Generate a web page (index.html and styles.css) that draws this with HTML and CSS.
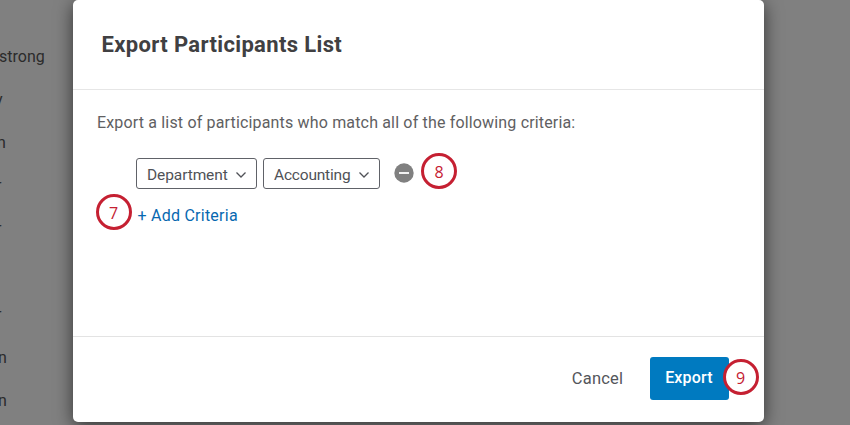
FILE: index.html
```html
<!DOCTYPE html>
<html lang="en">
<head>
<meta charset="utf-8">
<title>Export Participants List</title>
<link rel="stylesheet" href="styles.css">
</head>
<body>
<ul class="names">
  <li><span class="first">strong</span></li>
  <li><span class="clip-y">y</span></li>
  <li><span class="clip-n">n</span></li>
  <li><span class="clip-r">r</span></li>
  <li><span class="clip-r">r</span></li>
  <li></li>
  <li><span class="clip-r">r</span></li>
  <li><span class="clip-m">n</span></li>
  <li><span class="clip-m">n</span></li>
</ul>
<main class="modal">
  <header class="head"><h1>Export Participants List</h1></header>
  <section class="body">
    <p>Export a list of participants who match all of the following criteria:</p>
    <div class="criteria">
      <button class="select dept"><span>Department</span><svg width="12" height="8" viewBox="0 0 12 8"><path d="M1.500 1.500 6 6l4.500-4.500"/></svg></button>
      <button class="select acct"><span>Accounting</span><svg width="12" height="8" viewBox="0 0 12 8"><path d="M1.500 1.500 6 6l4.500-4.500"/></svg></button>
      <svg class="remove" width="20" height="20" viewBox="0 0 20 20"><circle cx="10" cy="10" r="9.700"/><path d="M5 10h10"/></svg>
      <span class="step">8</span>
    </div>
    <div class="add-row"><span class="step">7</span><a class="add">+ Add Criteria</a></div>
  </section>
  <footer class="foot">
    <button class="cancel">Cancel</button>
    <button class="export">Export</button>
    <span class="step nine">9</span>
  </footer>
</main>
</body>
</html>
```
FILE: styles.css
```css
* { box-sizing: border-box; }
body {
  margin: 0;
  width: 850px;
  height: 425px;
  overflow: hidden;
  display: flex;
  background: #808080;
  font-family: Roboto, "Liberation Sans", sans-serif;
  font-size: 16px;
  color: #54565b;
}
span, a { white-space: nowrap; }
.names {
  list-style: none;
  margin: 0;
  padding: 35px 0 0;
  width: 73px;
  flex: none;
  color: #2b2b2b;
}
.names li { height: 42.950px; line-height: 43px; }
.names span { display: inline-block; }
.first { margin-left: -1px; }
.clip-y { margin-left: -5px; }
.clip-n { margin-left: -3px; }
.clip-m { margin-left: -2px; }
.clip-r { margin-left: -4px; }
.modal {
  width: 691px;
  height: 421.500px;
  flex: none;
  display: flex;
  flex-direction: column;
  background: #fff;
  border-radius: 5px;
  box-shadow: 0 4px 18px rgba(0, 0, 0, .6);
}
.head {
  height: 90px;
  flex: none;
  padding: 1px 28.500px 0;
  display: flex;
  align-items: center;
  border-bottom: 1px solid #e6e6e6;
}
h1 { margin: 0; font-size: 22px; font-weight: 700; line-height: 26px; letter-spacing: .36px; color: #404042; }
.body { height: 247px; flex: none; padding: 20px 23px 0; border-bottom: 1px solid #e3e3e3; }
p { margin: 0; padding: 0 0 0 1px; line-height: 26px; letter-spacing: .165px; color: #606062; }
.criteria { display: flex; margin: 17px 0 0 40px; height: 42px; }
.select {
  height: 31px;
  margin: 5px 6px 0 0;
  padding: 2px 9px 0 10px;
  display: flex;
  align-items: center;
  justify-content: space-between;
  border: 1px solid #606268;
  border-radius: 3px;
  background: #fff;
  font: inherit;
  font-size: 15.500px;
  letter-spacing: -.1px;
  color: #505257;
}
.select span { padding-top: 1px; }
.dept { width: 121px; }
.acct { width: 117px; letter-spacing: -.2px; }
.select path { fill: none; stroke: #505257; stroke-width: 1.300; }
.remove { margin: 10px 7px 0 8px; flex: none; }
.remove circle { fill: #808080; }
.remove path { stroke: #fff; stroke-width: 1.800; }
.step {
  width: 36px;
  height: 36px;
  flex: none;
  border: 3px solid #c52032;
  border-radius: 50%;
  background: #fff;
  color: #c52032;
  font-family: "Open Sans", sans-serif;
  font-size: 16px;
  font-weight: 500;
  line-height: 32px;
  text-align: center;
}
.add-row { display: flex; align-items: center; height: 36px; margin: -1px 0 0 -.5px; }
.add { margin: 6px 0 0 6px; letter-spacing: .24px; color: #0768b0; }
.foot { display: flex; height: 84px; padding: 20.400px 5.500px 0 0; justify-content: flex-end; }
.cancel, .export { border: 0; font: inherit; height: 43px; padding: 0; }
.cancel { width: 52px; height: 42px; margin-right: 26px; background: none; font-size: 16.500px; letter-spacing: .2px; color: #54565b; }
.export { width: 79px; background: #007ac0; border-radius: 3px; color: #fff; font-weight: 500; letter-spacing: .2px; padding-bottom: 2px; }
.nine { margin: 1.500px 0 0 -6px; }
```
